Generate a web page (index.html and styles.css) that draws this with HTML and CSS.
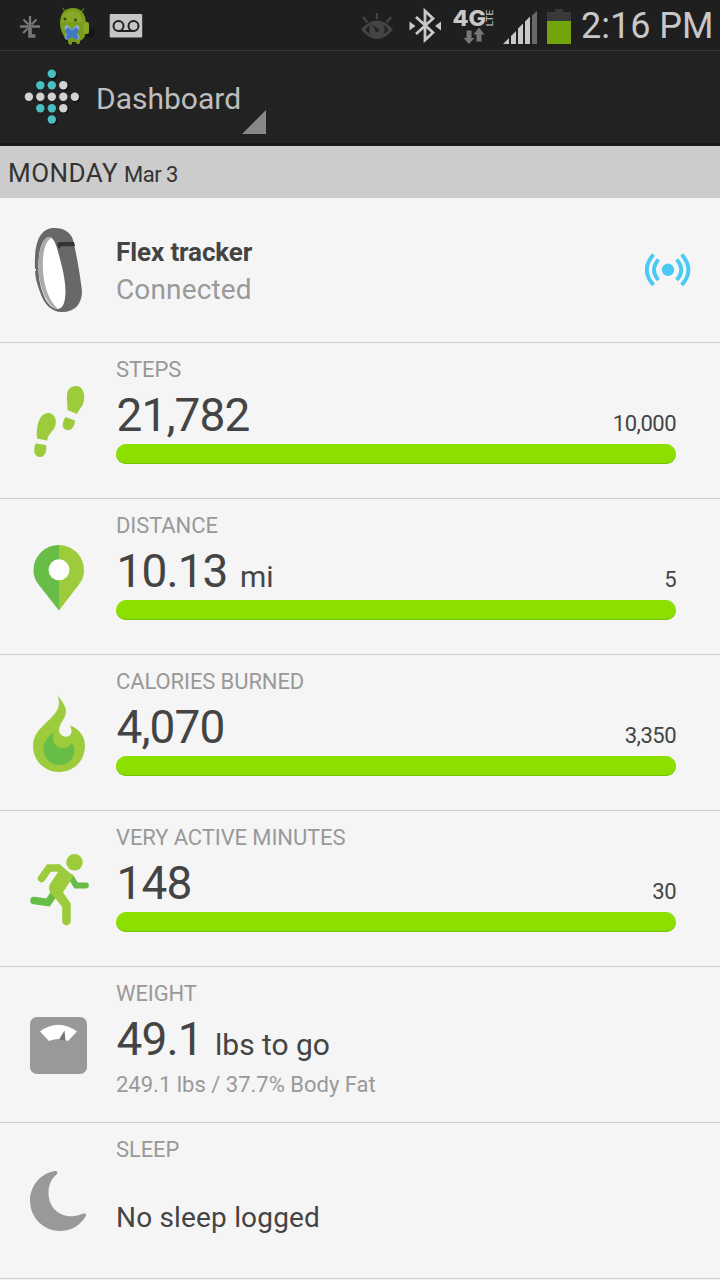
FILE: index.html
```html
<!DOCTYPE html>
<html lang="en">
<head>
<meta charset="utf-8">
<title>Dashboard</title>
<link rel="stylesheet" href="styles.css">
</head>
<body>
<div class="status">
  <svg width="180" height="50" viewBox="0 0 180 50">
    <g stroke="#777" stroke-width="2.300" fill="none">
      <path d="M20 26.500h8M32 26.500h8M30 16v9M23.500 19.500l5 5M36.500 19.500l-5 5M28 28.500l-5 4.500"/>
      <path d="M30 25v11h5.500" stroke-width="3.600"/>
    </g>
    <ellipse cx="88" cy="33" rx="7" ry="5" fill="#171717"/>
    <path d="M65 12l-2-4M81 12l3-3.500" stroke="#55701c" stroke-width="1.500"/>
    <path d="M60 24c0-11 5-16 13-16s13 6 13 16l-1 12c-1 3-4 4-5 5v2q-3 3-4-1h-4v2q-3 2-4-2v-2c-4-3-7-7-8-16z" fill="#789c1c"/>
    <path d="M63 17c3-7 12-8 17-3l3 8H62z" fill="#8fae2c" opacity=".7"/>
    <rect x="83.500" y="22" width="5.500" height="12" rx="2" fill="#82a72a"/>
    <circle cx="65" cy="19" r="1.500" fill="#38470f"/><circle cx="75.500" cy="20" r="1.500" fill="#38470f"/>
    <path d="M67 28l10 9M77 28l-10 9" stroke="#8fb0dc" stroke-width="5" stroke-linecap="round"/>
    <path d="M68 30l8 7M76 30l-8 7M68 32h8" stroke="#4377c4" stroke-width="4.500" stroke-linecap="round"/>
    <rect x="109.700" y="14" width="32.500" height="23.500" rx="1" fill="#c6c6c6"/>
    <g fill="none" stroke="#202020" stroke-width="2"><circle cx="118.500" cy="26" r="5"/><circle cx="133.500" cy="26" r="5"/><path d="M118 31h16"/></g>
  </svg>
  <svg class="status-right" width="230" height="50" viewBox="350 0 230 50">
    <path d="M361 29.500Q377 11.500 393 29.500Q377 48.500 361 29.500z" fill="#444"/>
    <path d="M365.500 29.500q2.500-3.500 5-4-2.500 4.500 0 8.500-3-1-5-4.500zM388.500 29.500q-2.500-3.500-5-4 2.500 4.500 0 8.500 3-1 5-4.500z" fill="#1f1f1f"/>
    <path d="M377 13v6M363 17l4.500 5.500M391 17l-4.500 5.500" fill="none" stroke="#444" stroke-width="2.200"/>
    <circle cx="377" cy="30" r="2" fill="#222"/><path d="M376.500 29.500l-4-4" stroke="#222" stroke-width="1.500"/>
    <path d="M416 17l17 15.500-8 7.500V11l8 7.500L416 34" fill="none" stroke="#c8c8c8" stroke-width="2.800"/>
    <path d="M409.500 21.500l6 4.500-6 4.500zM441 21.500l-6 4.500 6 4.500z" fill="#c8c8c8"/>
    <text class="network" x="452.500" y="26" textLength="33.500" lengthAdjust="spacingAndGlyphs">4G</text>
    <text class="lte" transform="translate(493 26.500) rotate(-90)" textLength="17" lengthAdjust="spacingAndGlyphs">LTE</text>
    <path d="M466.500 30.500h5V38h3l-5.500 6-5.500-6h3zM476.500 41.500h5V34.500h3l-5.500-7-5.500 7h3z" fill="#777"/>
    <g fill="#c8c8c8"><path d="M503 44l6-6v6zM511 44v-8l5-5v13zM518 44V28.500l5-5V44zM525 44V21.500l5-5V44z"/><path d="M532 44V15.500l5-4.500v33z" fill="#6a6a6a"/></g>
    <path d="M547 21v-9h8V9h8v3h8v9z" fill="#393939"/>
    <rect x="547" y="21" width="24" height="23" fill="#74a40c"/>
  </svg>
  <span class="clock">2:16 PM</span>
</div>
<header class="appbar">
  <svg width="96" height="92" viewBox="0 51 96 92">
    <g fill="#111"><circle cx="53" cy="75.500" r="4.200"/><circle cx="64.500" cy="87" r="4.200"/><circle cx="76" cy="98.500" r="4.200"/><circle cx="64.500" cy="109.500" r="4.200"/><circle cx="53" cy="121" r="4.200"/></g>
    <g fill="#49bfc1"><circle cx="51.800" cy="73.800" r="4.200"/><circle cx="40.300" cy="85.300" r="4.200"/><circle cx="51.800" cy="85.300" r="4.200"/><circle cx="40.300" cy="108.200" r="4.200"/><circle cx="51.800" cy="108.200" r="4.200"/><circle cx="51.800" cy="119.500" r="4.200"/></g>
    <g fill="#d2d2d2"><circle cx="63.300" cy="85.300" r="4.200"/><circle cx="28.900" cy="96.800" r="4.200"/><circle cx="40.300" cy="96.800" r="4.200"/><circle cx="51.800" cy="96.800" r="4.200"/><circle cx="63.300" cy="96.800" r="4.200"/><circle cx="74.800" cy="96.800" r="4.200"/><circle cx="63.300" cy="108.200" r="4.200"/></g>
  </svg>
  <h1 class="title">Dashboard</h1>
  <span class="spinner"></span>
</header>
<div class="date"><span class="weekday">MONDAY</span><span class="day">Mar 3</span></div>
<main>
  <section class="row tracker">
    <svg class="icon" width="116" height="144" viewBox="0 198 116 144">
      <path fill="#686868" d="M35 270C34 246 38 229 53 228c10-.5 18 4 20 12 4 16 7 35 9 51 0 13-7 21-20 21-11 0-18-8-22-20-3-8-5-15-5-22z"/>
      <path fill="#fff" d="M38.500 268c0 11 2 20 6 29 3 7 8 12 13.500 12 5-1 7-6 7.500-16 0-16-4.500-30-8.500-45-2-6-4-11-8-11-8 1-11 18-10.500 31z"/>
      <path fill="#ababab" d="M49 237c-8 1-11 18-10.500 31 0 13 4 24 8 31 3 6 7 9.500 11.500 10-9-8-14-22-15-38-1-17 2-31 9-33q-1-1-3-1z"/>
      <path fill="#333" d="M57 244q1-2 4-2h13l1 4.300H61l-2 2.700z"/>
      <path fill="#f5f5f5" d="M34 269h2v2h-2z"/>
    </svg>
    <div class="tracker-text"><strong class="tracker-name">Flex tracker</strong><span class="tracker-state">Connected</span></div>
    <svg class="signal" width="46" height="34" viewBox="645 253 46 34">
      <circle cx="668" cy="269.800" r="6.200" fill="#49caf5"/>
      <path d="M653.500 254.500q-13.500 15.500 0 30.500M658.500 259.500q-9 10.500 0 20.500M681.700 254.500q13.500 15.500 0 30.500M676.700 259.500q9 10.500 0 20.500" fill="none" stroke="#49caf5" stroke-width="3.800"/>
    </svg>
  </section>

  <section class="row">
    <svg class="icon" width="116" height="155" viewBox="0 343 116 155" fill="#9ccc3c">
      <path d="M67.500 410C68 400 63 387 76 386c6 0 9 6 8 14-1 7-5 9-7 14z"/>
      <path d="M65.500 417l9.500 3.500c0 5-3 10-7 9.500-6 0-7-6-2.500-13z"/>
      <path d="M37 438.500c-1-12 2-25 11-25.500 6 0 9 6 7.500 12-1.500 6-7 8-8.500 15.500z"/>
      <path d="M35.500 443.500l10.500 1.500c1 6-1 12-6 12-6 0-7-7-4.500-13.500z"/>
    </svg>
    <div class="body"><h2 class="label">STEPS</h2><div class="figures"><span class="value">21,782</span><span class="goal">10,000</span></div><div class="bar"></div></div>
  </section>

  <section class="row">
    <svg class="icon" width="116" height="155" viewBox="0 499 116 155">
      <path d="M59 545a25 25 0 0 0-25.500 25c0 8 3 12 7 17L59 610.500z" fill="#68bd46"/>
      <path d="M59 545a25 25 0 0 1 25 25c0 8-3 12-7 17L59 610.500z" fill="#9ccc3c"/>
      <circle cx="59" cy="569.800" r="10.500" fill="#fff"/>
    </svg>
    <div class="body"><h2 class="label">DISTANCE</h2><div class="figures"><span class="value">10.13</span><span class="unit">mi</span><span class="goal">5</span></div><div class="bar"></div></div>
  </section>

  <section class="row">
    <svg class="icon" width="116" height="155" viewBox="0 655 116 155">
      <path fill="#9ccc3c" d="M57.500 695.500c11 13 10 18 4 27-4 7-3 12 3 14 6 1 9-4 5.500-11 9 3 15 11 15 20 0 15-11 26.500-26 26.500S33 760 33 746c0-13 9-19 18-28 7-7 10-13 6.500-22.500z"/>
      <path fill="#68bd46" d="M53.500 732c-4 3-10 9-10 17 0 9 7 16 16 16s15-7 15-15q0-4-3-7c-4 8-22 8-18-11z"/>
    </svg>
    <div class="body"><h2 class="label">CALORIES BURNED</h2><div class="figures"><span class="value">4,070</span><span class="goal">3,350</span></div><div class="bar"></div></div>
  </section>

  <section class="row">
    <svg class="icon" width="116" height="155" viewBox="0 811 116 155">
      <path d="M71 877l5 8.500H86" fill="none" stroke="#68bd46" stroke-width="5.800" stroke-linecap="round"/>
      <path d="M34 900.500l14 2 5.500-8" fill="none" stroke="#68bd46" stroke-width="7.500" stroke-linecap="round"/>
      <circle cx="74.500" cy="862.300" r="8.300" fill="#9ccc3c"/>
      <path d="M41.500 878.500L49 868h9" fill="none" stroke="#9ccc3c" stroke-width="7.500" stroke-linecap="round"/>
      <path d="M57 864.300h2.500L73.500 876 63 892.500l7.700 11V921a4.200 4.200 0 0 1-8.500 0v-14L51 893q-3.500-4-1-9l8-12z" fill="#9ccc3c"/>
    </svg>
    <div class="body"><h2 class="label">VERY ACTIVE MINUTES</h2><div class="figures"><span class="value">148</span><span class="goal">30</span></div><div class="bar"></div></div>
  </section>

  <section class="row">
    <svg class="icon" width="116" height="155" viewBox="0 967 116 155">
      <rect x="30" y="1017" width="57" height="57" rx="7" fill="#999"/>
      <path d="M40 1031.500q18-13.500 37 0l-9 9.500q-9-4-19 0z" fill="#fff"/>
      <path d="M59 1039.500l5.500-9 1 10z" fill="#777"/>
    </svg>
    <div class="body"><h2 class="label">WEIGHT</h2><div class="figures"><span class="value">49.1</span><span class="unit">lbs to go</span></div><p class="detail">249.1 lbs / 37.7% Body Fat</p></div>
  </section>

  <section class="row">
    <svg class="icon" width="116" height="155" viewBox="0 1123 116 155">
      <path d="M54.500 1171c3-.5 4 2 1.500 4-5 4-7.500 11-7.500 18 0 15 12 25 26 23q4-.5 8-2.300c3-1 5 1 2.500 3.500-5 8-14 13.800-25 13.800a30 30 0 0 1-30-30c0-15 10-27 24.500-30z" fill="#999"/>
    </svg>
    <div class="body"><h2 class="label">SLEEP</h2><p class="message">No sleep logged</p></div>
  </section>
</main>
</body>
</html>
```
FILE: styles.css
```css
* { box-sizing: border-box; }
body { margin: 0; width: 720px; height: 1280px; overflow: hidden; background: #f5f5f5; color: #444; font-family: Roboto, sans-serif; }
svg { display: block; flex: none; }
h1, h2, p { margin: 0; font-weight: 400; }
.status { display: flex; height: 51px; background: #1f1f1f; border-bottom: 1px solid #363636; }
.status-right { margin-left: 170px; }
.clock { padding-left: 1px; font-size: 36px; line-height: 52px; color: #c8c8c8; white-space: nowrap; }
.network { font: 800 22px Inter, sans-serif; fill: #c8c8c8; }
.lte { font: 9px Roboto, sans-serif; fill: #c8c8c8; }
.appbar { display: flex; height: 95px; background: #222; border-bottom: 3px solid #191919; }
.title { font-size: 30px; line-height: 95px; color: #bebebe; white-space: nowrap; width: 146px; }
.spinner { align-self: flex-end; width: 24px; height: 24px; margin-bottom: 9px; background: #888; clip-path: polygon(100% 0, 100% 100%, 0 100%); }
.date { display: flex; align-items: baseline; height: 52px; padding-left: 8px; background: #ccc; color: #333; line-height: 54px; }
.weekday { width: 116px; font-size: 26px; letter-spacing: .45px; }
.day { font-size: 22px; letter-spacing: -.5px; }
.row { display: flex; height: 156px; border-bottom: 1px solid #ccc; }
.tracker { height: 145px; }
.tracker-text { display: flex; flex-direction: column; flex: 1; padding-top: 36px; }
.tracker-name { font-size: 26px; line-height: 36px; letter-spacing: -.1px; }
.tracker-state { font-size: 28px; line-height: 40px; letter-spacing: .15px; color: #999; }
.signal { margin: 55px 29px 0 0; }
.body { width: 560px; padding-top: 14px; }
.label { margin-bottom: 3px; font-size: 22px; line-height: 26px; letter-spacing: -.1px; color: #999; }
.figures { display: flex; align-items: baseline; height: 58px; line-height: 58px; white-space: nowrap; }
.value { padding-left: .5px; font-size: 46px; letter-spacing: -.9px; }
.unit { margin-left: 12.5px; font-size: 30px; letter-spacing: -.05px; }
.goal { margin-left: auto; font-size: 22px; letter-spacing: -.5px; }
.bar { height: 20px; border-radius: 10px; background: #8be000; box-shadow: inset 0 -1px #76c200; }
.detail { margin-top: 4px; font-size: 22px; line-height: 26px; color: #999; }
.message { margin-top: 38px; font-size: 28px; line-height: 34px; letter-spacing: .18px; }
```
